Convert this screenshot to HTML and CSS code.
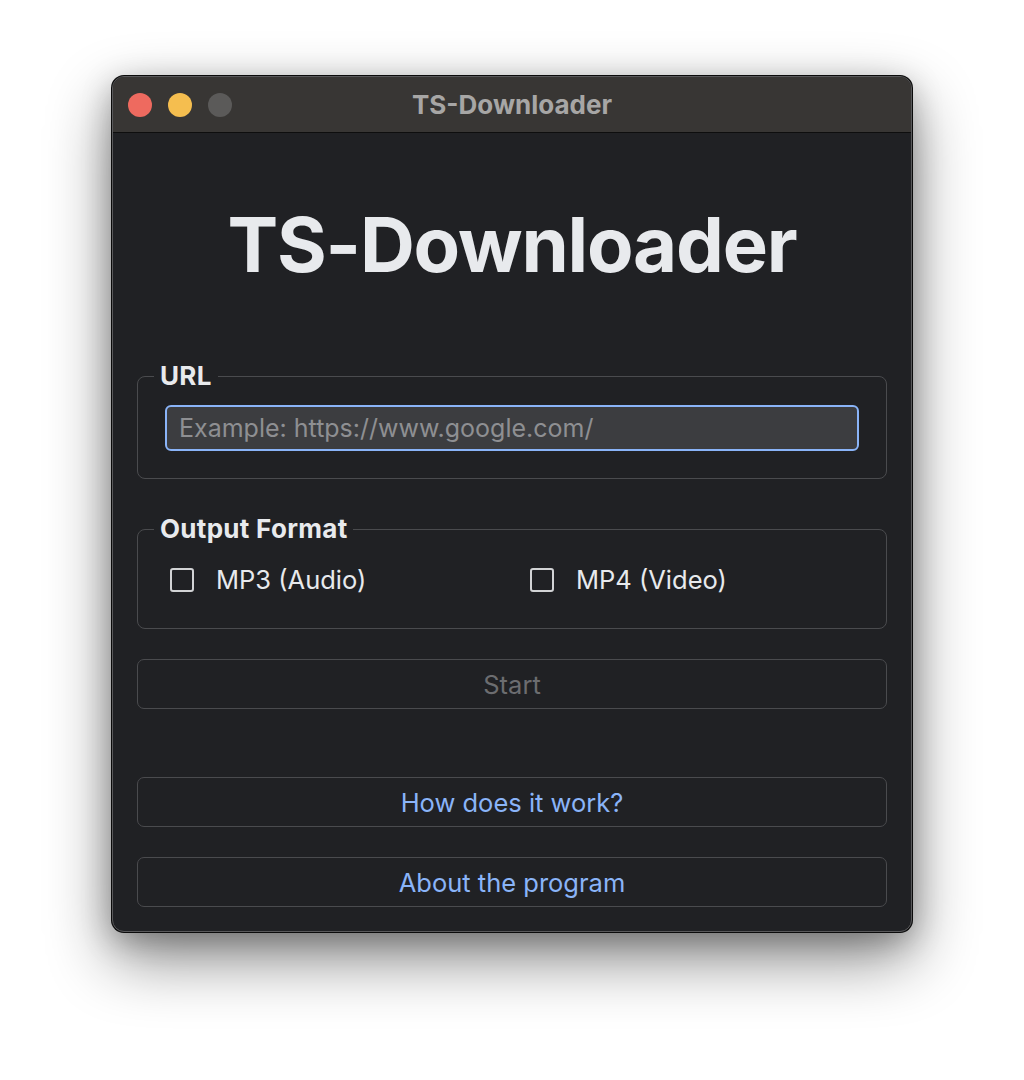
FILE: index.html
```html
<!DOCTYPE html>
<html lang="en">
<head>
<meta charset="utf-8">
<title>TS-Downloader</title>
<link rel="stylesheet" href="styles.css">
</head>
<body>
<div class="window">
  <div class="titlebar">
    <div class="lights">
      <span class="light red"></span>
      <span class="light yellow"></span>
      <span class="light gray"></span>
    </div>
    <div class="title">TS-Downloader</div>
  </div>
  <div class="content">
    <h1 class="heading">TS-Downloader</h1>
    <fieldset class="group url-group">
      <legend class="legend">URL</legend>
      <input class="url-input" type="text" placeholder="Example: https://www.google.com/">
    </fieldset>
    <fieldset class="group format-group">
      <legend class="legend">Output Format</legend>
      <div class="options">
        <label class="option"><span class="check"></span><span class="option-text">MP3 (Audio)</span></label>
        <label class="option"><span class="check"></span><span class="option-text">MP4 (Video)</span></label>
      </div>
    </fieldset>
    <button class="btn btn-start">Start</button>
    <button class="btn btn-link btn-how">How does it work?</button>
    <button class="btn btn-link btn-about">About the program</button>
  </div>
</div>
</body>
</html>
```
FILE: styles.css
```css
* { box-sizing: border-box; }
html, body { margin: 0; padding: 0; background: #ffffff; }
html { min-height: 1080px; }
body {
  font-family: Inter, "Noto Sans", sans-serif;
  padding-top: 76px;
  min-height: 1080px;
}
.window {
  width: 800px;
  margin: 0 auto;
  background: #202124;
  border: 1px solid #59595b;
  border-radius: 12px;
  overflow: hidden;
  box-shadow: 0 0 0 1px #0b0b0b, 0 26px 64px rgba(0,0,0,0.48), 0 8px 30px rgba(0,0,0,0.25);
}
.titlebar {
  height: 56px;
  background: #383634;
  border-bottom: 1px solid #0e0e0e;
  display: flex;
  align-items: center;
  position: relative;
}
.lights {
  display: flex;
  gap: 16px;
  padding-left: 15px;
}
.light {
  width: 24px;
  height: 24px;
  border-radius: 50%;
  display: block;
}
.red { background: #ee6a5f; }
.yellow { background: #f5be4f; }
.gray { background: #5b5a59; }
.title {
  position: absolute;
  left: 0; right: 0;
  text-align: center;
  font-size: 26px;
  font-weight: 700;
  color: #a7a6a5;
  pointer-events: none;
}
.content {
  padding: 0 24px 24px;
  display: flex;
  flex-direction: column;
}
.heading {
  margin: 63px 0 0;
  font-size: 76px;
  line-height: 96px;
  font-weight: 700;
  color: #e8eaed;
  text-align: center;
  letter-spacing: -1.2px;
}
.group {
  margin: 0;
  border: 1px solid #4a4b4e;
  border-radius: 8px;
  min-width: 0;
}
.legend {
  font-size: 26px;
  line-height: 26px;
  font-weight: 700;
  color: #e8eaed;
  padding: 0 6px;
  margin-left: -11px;
  letter-spacing: 0.3px;
}
.url-group {
  margin-top: 71px;
  padding: 16px 27px 27px;
}
.url-input {
  display: block;
  width: 100%;
  height: 46px;
  background: #3c3d40;
  border: 2px solid #8ab4f8;
  border-radius: 6px;
  padding: 0 12px;
  font-family: Inter, "Noto Sans", sans-serif;
  font-size: 25px;
  color: #e8eaed;
  outline: none;
}
.url-input::placeholder { color: #8e8f92; }
.format-group {
  margin-top: 37px;
  padding: 24px 27px 35px;
}
.options {
  display: grid;
  grid-template-columns: 360px 1fr;
}
.option {
  display: flex;
  align-items: center;
  gap: 22px;
  padding-left: 5px;
  height: 27px;
}
.check {
  width: 24px;
  height: 24px;
  border: 2px solid #d2d3d5;
  border-radius: 3px;
  flex: none;
}
.option-text {
  font-size: 25.5px;
  color: #e8eaed;
}
.btn {
  display: block;
  width: 100%;
  height: 50px;
  background: transparent;
  border: 1px solid #4a4b4e;
  border-radius: 7px;
  font-family: Inter, "Noto Sans", sans-serif;
  font-size: 25.5px;
  padding: 0;
}
.btn-start {
  margin-top: 30px;
  color: #6c6d70;
}
.btn-link { color: #8ab4f8; }
.btn-how { margin-top: 68px; }
.btn-about { margin-top: 30px; }
```
